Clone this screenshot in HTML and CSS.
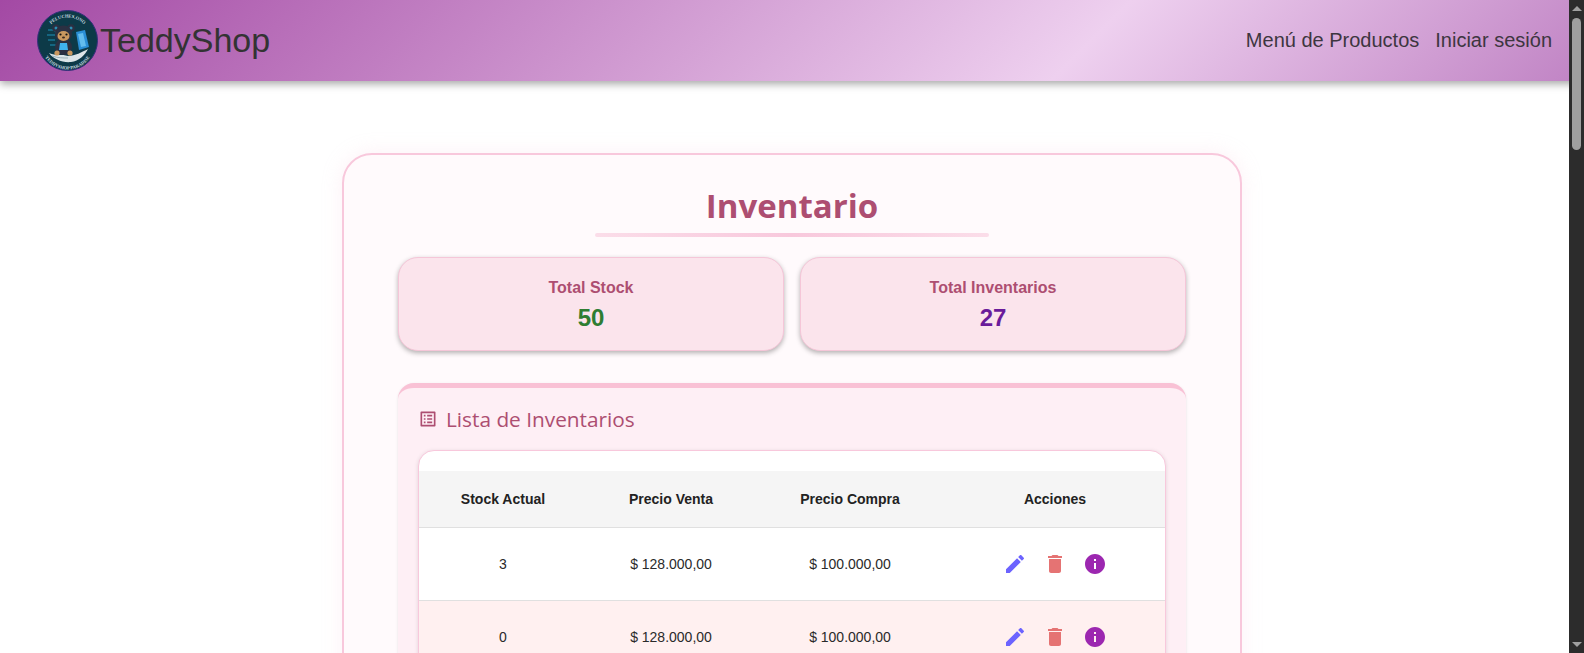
FILE: index.html
```html
<!DOCTYPE html>
<html lang="es">
<head>
    <meta charset="UTF-8">
    <title>TeddyShop - Inventario</title>
    <link rel="stylesheet" href="styles.css">
</head>
<body>
    <header class="navbar">
        <div class="brand">
            <svg class="logo" viewBox="0 0 61 61">
                <defs>
                    <path id="arcTop" d="M7 31a23.5 23.5 0 0 1 47 0"/>
                    <path id="arcBottom" d="M4 33a26.5 26.5 0 0 0 53 0"/>
                </defs>
                <circle cx="30.5" cy="30.5" r="30" fill="#0d3a48" stroke="#35307c" stroke-width="1"/>
                <text class="logo-text"><textPath href="#arcTop" startOffset="50%" text-anchor="middle">PELUCHES.ONO</textPath></text>
                <text class="logo-text"><textPath href="#arcBottom" startOffset="50%" text-anchor="middle">TEDDYSHOP PARADISE</textPath></text>
                <path d="M11 20h6l3 3M10 25h8M11 30h7M13 35h6" stroke="#1f8fb8" stroke-width="1.2" fill="none"/>
                <path d="M39 22l9-2 4 17-10 3z" fill="#2a8fd6"/>
                <path d="M41 24l5-1 3 13-5 1z" fill="#63bdee"/>
                <path d="M12 43c7 3 13 1 19 3 7 0 14-4 20-7-3 6-9 12-17 13-8 1-18-3-22-9z" fill="#dbe5e8"/>
                <path d="M15 46c6 2 11 2 16 2" stroke="#8aa3ab" stroke-width=".8" fill="none"/>
                <circle cx="19" cy="18" r="3.8" fill="#2b3042"/>
                <circle cx="34" cy="18" r="3.8" fill="#2b3042"/>
                <circle cx="19" cy="18" r="1.5" fill="#2d8fb5"/>
                <circle cx="34" cy="18" r="1.5" fill="#2d8fb5"/>
                <ellipse cx="26.5" cy="37" rx="8.5" ry="8" fill="#2b3042"/>
                <circle cx="26.5" cy="24" r="8.5" fill="#2b3042"/>
                <ellipse cx="26.5" cy="26" rx="6" ry="5" fill="#c9985f"/>
                <circle cx="23.5" cy="24.5" r="1.1" fill="#111"/>
                <circle cx="29.5" cy="24.5" r="1.1" fill="#111"/>
                <ellipse cx="26.5" cy="27.5" rx="1.5" ry="1" fill="#3a2a20"/>
                <path d="M23 33h7l1 7h-9z" fill="#3fb2ee"/>
                <circle cx="20" cy="43" r="2.6" fill="#c9985f"/>
                <circle cx="33" cy="43" r="2.6" fill="#c9985f"/>
            </svg>
            <span class="brand-name">TeddyShop</span>
        </div>
        <nav class="nav-links">
            <a href="#">Menú de Productos</a>
            <a href="#">Iniciar sesión</a>
        </nav>
    </header>

    <main class="page">
        <section class="inventory-card">
            <h1 class="inventory-title">Inventario</h1>
            <div class="stats">
                <div class="stat-box">
                    <div class="stat-label">Total Stock</div>
                    <div class="stat-value green">50</div>
                </div>
                <div class="stat-box">
                    <div class="stat-label">Total Inventarios</div>
                    <div class="stat-value purple">27</div>
                </div>
            </div>
            <div class="list-panel">
                <h2 class="list-title">
                    <svg class="list-icon" viewBox="0 0 24 24"><path d="M19 5v14H5V5h14m1.1-2H3.9c-.5 0-.9.4-.9.9v16.2c0 .4.4.9.9.9h16.2c.4 0 .9-.5.9-.9V3.9c0-.5-.5-.9-.9-.9zM11 7h6v2h-6V7zm0 4h6v2h-6v-2zm0 4h6v2h-6zM7 7h2v2H7zm0 4h2v2H7zm0 4h2v2H7z"/></svg>
                    Lista de Inventarios
                </h2>
                <div class="table-wrap">
                    <table class="inventory-table">
                        <colgroup>
                            <col class="col-stock">
                            <col class="col-venta">
                            <col class="col-compra">
                            <col class="col-acciones">
                        </colgroup>
                        <thead>
                            <tr>
                                <th>Stock Actual</th>
                                <th>Precio Venta</th>
                                <th>Precio Compra</th>
                                <th>Acciones</th>
                            </tr>
                        </thead>
                        <tbody>
                            <tr>
                                <td>3</td>
                                <td>$ 128.000,00</td>
                                <td>$ 100.000,00</td>
                                <td>
                                    <div class="actions">
                                        <button class="icon-btn edit"><svg viewBox="0 0 24 24"><path d="M3 17.25V21h3.75L17.81 9.94l-3.75-3.75L3 17.25zM20.71 7.04c.39-.39.39-1.02 0-1.41l-2.34-2.34c-.39-.39-1.02-.39-1.41 0l-1.83 1.83 3.75 3.75 1.83-1.83z"/></svg></button>
                                        <button class="icon-btn trash"><svg viewBox="0 0 24 24"><path d="M6 19c0 1.1.9 2 2 2h8c1.1 0 2-.9 2-2V7H6v12zM19 4h-3.5l-1-1h-5l-1 1H5v2h14V4z"/></svg></button>
                                        <button class="icon-btn info"><svg viewBox="0 0 24 24"><path d="M12 2C6.48 2 2 6.48 2 12s4.48 10 10 10 10-4.48 10-10S17.52 2 12 2zm1 15h-2v-6h2v6zm0-8h-2V7h2v2z"/></svg></button>
                                    </div>
                                </td>
                            </tr>
                            <tr class="low-stock">
                                <td>0</td>
                                <td>$ 128.000,00</td>
                                <td>$ 100.000,00</td>
                                <td>
                                    <div class="actions">
                                        <button class="icon-btn edit"><svg viewBox="0 0 24 24"><path d="M3 17.25V21h3.75L17.81 9.94l-3.75-3.75L3 17.25zM20.71 7.04c.39-.39.39-1.02 0-1.41l-2.34-2.34c-.39-.39-1.02-.39-1.41 0l-1.83 1.83 3.75 3.75 1.83-1.83z"/></svg></button>
                                        <button class="icon-btn trash"><svg viewBox="0 0 24 24"><path d="M6 19c0 1.1.9 2 2 2h8c1.1 0 2-.9 2-2V7H6v12zM19 4h-3.5l-1-1h-5l-1 1H5v2h14V4z"/></svg></button>
                                        <button class="icon-btn info"><svg viewBox="0 0 24 24"><path d="M12 2C6.48 2 2 6.48 2 12s4.48 10 10 10 10-4.48 10-10S17.52 2 12 2zm1 15h-2v-6h2v6zm0-8h-2V7h2v2z"/></svg></button>
                                    </div>
                                </td>
                            </tr>
                        </tbody>
                    </table>
                </div>
            </div>
        </section>
    </main>

    <div class="scrollbar">
        <span class="arrow-up"></span>
        <span class="thumb"></span>
        <span class="arrow-down"></span>
    </div>
</body>
</html>
```

FILE: styles.css
```css
html, body {
    height: 100%;
    overflow: hidden;
}
body {
    margin: 0;
    background-color: #fff;
    font-family: "Liberation Sans", Arial, sans-serif;
    color: #222;
}
.navbar {
    position: relative;
    z-index: 2;
    height: 81px;
    box-sizing: border-box;
    padding: 0 32px 0 37px;
    display: flex;
    align-items: center;
    justify-content: space-between;
    background: linear-gradient(135deg, #a349a4 0%, #eed0ef 68%, #c083c4 100%);
    box-shadow: 0 3px 8px rgba(0, 0, 0, 0.35);
}
.brand {
    display: flex;
    align-items: center;
    gap: 2px;
}
.logo {
    width: 61px;
    height: 61px;
}
.logo-text {
    font-family: "Liberation Serif", serif;
    font-size: 4.6px;
    font-weight: bold;
    fill: #c9dde0;
}
.brand-name {
    font-size: 34px;
    color: #333;
}
.nav-links {
    display: flex;
    gap: 16px;
}
.nav-links a {
    font-size: 20px;
    color: #3d3640;
    text-decoration: none;
}
.page {
    padding-top: 72px;
}
.inventory-card {
    width: 900px;
    box-sizing: border-box;
    margin: 0 auto;
    padding: 30px 54px;
    background-color: #fffafc;
    border: 2px solid #f8c8dc;
    border-radius: 30px;
    box-shadow: 0 0 20px rgba(248, 200, 220, 0.25);
}
.inventory-title {
    margin: 0 0 20px;
    text-align: center;
    font-family: "Comic Sans MS", "Open Sans", sans-serif;
    font-size: 33px;
    line-height: 42px;
    color: #ad4e71;
}
.inventory-title::after {
    content: "";
    display: block;
    width: 394px;
    height: 4px;
    margin: 6px auto 0;
    border-radius: 2px;
    background: linear-gradient(90deg, #fbdde9, #f8c8dc, #fbdde9);
}
.stats {
    display: grid;
    grid-template-columns: 1fr 1fr;
    gap: 16px;
    margin-bottom: 32px;
}
.stat-box {
    height: 94px;
    box-sizing: border-box;
    padding-top: 20px;
    text-align: center;
    background-color: #fbe4ec;
    border: 1px solid #f5c6d8;
    border-radius: 20px;
    box-shadow: 0 2px 5px rgba(0, 0, 0, 0.3);
}
.stat-label {
    font-size: 16px;
    line-height: 20px;
    font-weight: bold;
    color: #ad4e71;
}
.stat-value {
    margin-top: 5px;
    font-size: 24px;
    line-height: 30px;
    font-weight: bold;
}
.green {
    color: #2e7d32;
}
.purple {
    color: #6a1b9a;
}
.list-panel {
    padding: 0 20px 24px;
    background-color: #feeff5;
    border-top: 5px solid #f9c1d5;
    border-radius: 16px;
    box-shadow: 0 1px 3px rgba(0, 0, 0, 0.1);
}
.list-title {
    display: flex;
    align-items: center;
    gap: 8px;
    margin: 0;
    padding: 16px 0;
    font-family: "Comic Sans MS", "Open Sans", sans-serif;
    font-size: 20.8px;
    line-height: 30px;
    font-weight: normal;
    color: #ad4e71;
}
.list-icon {
    width: 20px;
    height: 20px;
    fill: #ad4e71;
}
.table-wrap {
    padding-top: 20px;
    background-color: #fff;
    border: 1px solid #f8c8dc;
    border-radius: 16px;
    overflow: hidden;
    box-shadow: 0 1px 4px rgba(0, 0, 0, 0.12);
}
.inventory-table {
    width: 100%;
    table-layout: fixed;
    border-collapse: collapse;
    font-size: 14px;
}
.col-stock,
.col-venta {
    width: 168px;
}
.col-compra {
    width: 190px;
}
.inventory-table th {
    height: 56px;
    padding: 0;
    background-color: #f5f5f5;
    border-bottom: 1px solid #e0e0e0;
    font-size: 14px;
    color: #222;
}
.inventory-table td {
    height: 72px;
    padding: 0;
    text-align: center;
    border-bottom: 1px solid #e0e0e0;
    color: #2a2a2a;
}
.low-stock td {
    background-color: #fff0f0;
}
.actions {
    display: flex;
    justify-content: center;
}
.icon-btn {
    width: 40px;
    height: 40px;
    padding: 8px;
    border: none;
    background: none;
}
.icon-btn svg {
    display: block;
    width: 24px;
    height: 24px;
}
.edit svg {
    fill: #6c63ff;
}
.trash svg {
    fill: #e57373;
}
.info svg {
    fill: #9c27b0;
}
.scrollbar {
    position: fixed;
    z-index: 3;
    top: 0;
    right: 0;
    bottom: 0;
    width: 15px;
    display: flex;
    flex-direction: column;
    align-items: center;
    background-color: #2c2c2c;
}
.arrow-up {
    margin-top: 6px;
    border: 5px solid transparent;
    border-top: 0;
    border-bottom-color: #a0a0a0;
}
.thumb {
    width: 9px;
    height: 132px;
    margin-top: 7px;
    border-radius: 5px;
    background-color: #9f9f9f;
}
.arrow-down {
    margin-top: auto;
    margin-bottom: 6px;
    border: 5px solid transparent;
    border-bottom: 0;
    border-top-color: #a0a0a0;
}
```
